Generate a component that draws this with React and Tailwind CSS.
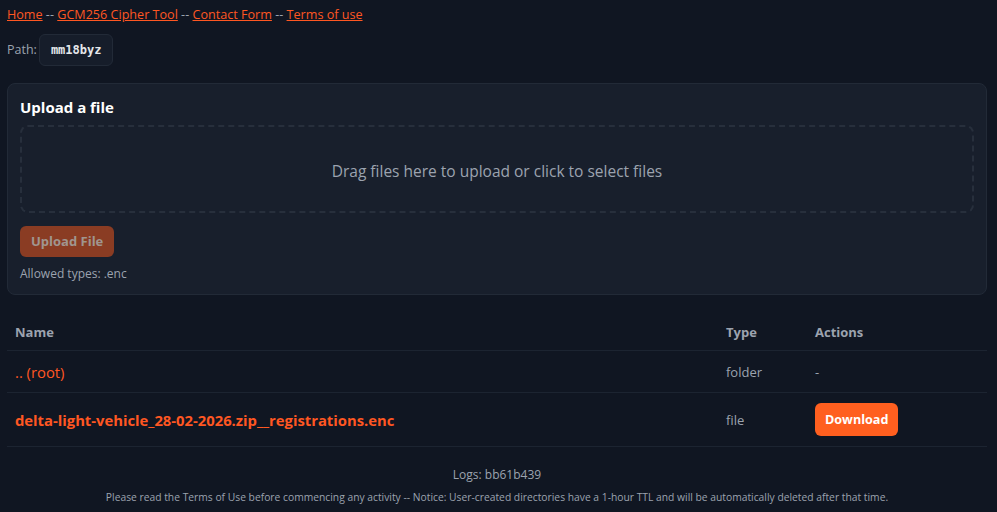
const files = [
  { name: '.. (root)', type: 'folder', bold: false },
  { name: 'delta-light-vehicle_28-02-2026.zip__registrations.enc', type: 'file', bold: true },
];

export default function App() {
  return (
    <div
      className="min-h-screen bg-[#101622] text-[#9ca3af] pl-[7px] pr-[10px] pt-[5px]"
      style={{ fontFamily: '"Open Sans", "Noto Sans", sans-serif' }}
    >
      <nav className="text-[12.6px] leading-5">
        <a href="#" className="text-[#ff5722] underline">Home</a>
        <span className="text-[#9ca3af]"> -- </span>
        <a href="#" className="text-[#ff5722] underline">GCM256 Cipher Tool</a>
        <span className="text-[#9ca3af]"> -- </span>
        <a href="#" className="text-[#ff5722] underline">Contact Form</a>
        <span className="text-[#9ca3af]"> -- </span>
        <a href="#" className="text-[#ff5722] underline">Terms of use</a>
      </nav>

      <div className="mt-[9px] flex items-center gap-[2px] text-[12.5px]">
        <span>Path:</span>
        <code
          className="h-[32px] px-[11px] flex items-center rounded-md border border-[#222a37] bg-[#161d2a] text-[#e5e7eb] font-bold text-[12px]"
          style={{ fontFamily: '"DejaVu Sans Mono", monospace' }}
        >
          mm18byz
        </code>
      </div>

      <section className="mt-[17px] rounded-lg border border-[#222a37] bg-[#181f2c] px-[12px] pt-[11px] pb-[10px]">
        <h2 className="text-[15px] font-bold text-white leading-6">Upload a file</h2>
        <div className="mt-[6px] h-[88px] pt-[5px] rounded-lg border-2 border-dashed border-[#272f3c] flex items-center justify-center text-[15.5px] font-medium text-[#9ca3af]">
          Drag files here to upload or click to select files
        </div>
        <button className="mt-[13px] h-[31px] px-[11px] rounded-md bg-[#8a3c23] text-[13px] font-bold text-[#a0968f]">
          Upload File
        </button>
        <div className="mt-[7px] text-[12px] leading-5">Allowed types: .enc</div>
      </section>

      <table className="mt-[19px] w-full text-left border-collapse table-fixed">
        <colgroup>
          <col />
          <col className="w-[89px]" />
          <col className="w-[172px]" />
        </colgroup>
        <thead>
          <tr className="border-b border-[#1c2431] h-[36px] text-[13px] font-bold text-[#9ca3af]">
            <th className="px-[8px] pt-[2px] font-bold">Name</th>
            <th className="p-0 pt-[2px] font-bold">Type</th>
            <th className="p-0 pt-[2px] font-bold">Actions</th>
          </tr>
        </thead>
        <tbody>
          {files.map((f) => (
            <tr key={f.name} className={`border-b border-[#1c2431] ${f.bold ? 'h-[54px]' : 'h-[42px]'}`}>
              <td className="px-[8px] pt-[2px]">
                <a href="#" className={`text-[#ff5722] text-[14.8px] ${f.bold ? 'font-bold' : ''}`}>{f.name}</a>
              </td>
              <td className="p-0 pt-[3px] text-[13px] text-[#9ca3af]">{f.type}</td>
              <td className="p-0 text-[13px] text-[#9ca3af]">
                {f.type === 'file' ? (
                  <button className="h-[33px] px-[10px] pt-[3px] rounded-md bg-[#ff5f1f] text-white text-[12.6px] font-bold">
                    Download
                  </button>
                ) : (
                  <span className="inline-block pt-[3px]">-</span>
                )}
              </td>
            </tr>
          ))}
        </tbody>
      </table>

      <footer className="text-center pt-[18px]">
        <div className="text-[12px] leading-5">Logs: bb61b439</div>
        <div className="mt-[4px] text-[10.3px] leading-4">
          Please read the Terms of Use before commencing any activity -- Notice: User-created directories have a 1-hour TTL and will be automatically deleted after that time.
        </div>
      </footer>
    </div>
  );
}
